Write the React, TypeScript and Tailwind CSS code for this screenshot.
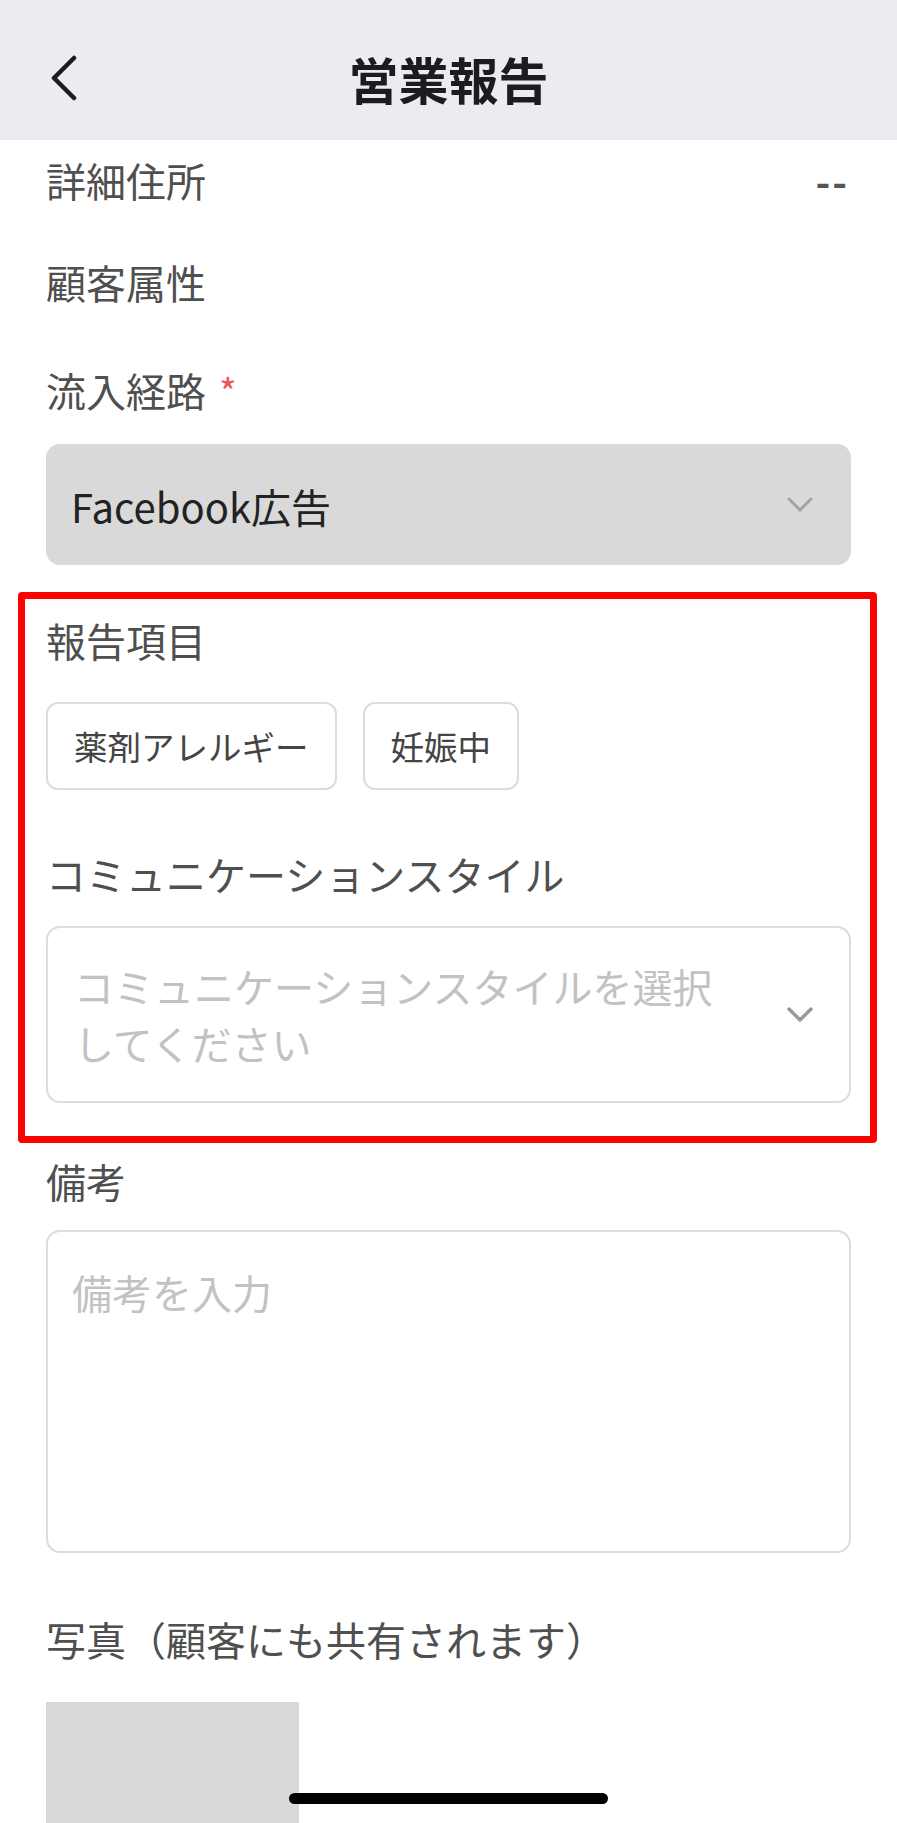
import React from 'react';

const Chevron: React.FC<{ className?: string; stroke?: number }> = ({ className, stroke = 3 }) => (
  <svg className={className} viewBox="0 0 26 16" fill="none">
    <polyline points="2,2 13,13 24,2" stroke="currentColor" strokeWidth={stroke} strokeLinecap="round" strokeLinejoin="round" />
  </svg>
);

const Label: React.FC<{ children: React.ReactNode; className?: string }> = ({ children, className = '' }) => (
  <div className={`text-[40px] leading-[56px] text-[#4f4f4f] ${className}`}>{children}</div>
);

const App: React.FC = () => {
  return (
    <div className="relative w-[897px] h-[1823px] overflow-hidden bg-white font-['Noto_Sans_CJK_JP',sans-serif]">
      {/* Header */}
      <header className="h-[140px] bg-[#ebebf0] flex items-center pt-[16px]">
        <div className="w-[130px] pl-[50px] flex items-center">
          <svg width="27" height="46" viewBox="0 0 27 46" fill="none">
            <polyline points="24,3 4,23 24,43" stroke="#1c1c1e" strokeWidth="4.5" strokeLinecap="round" strokeLinejoin="round" />
          </svg>
        </div>
        <h1 className="flex-1 text-center text-[50px] font-bold text-[#1c1c1e] leading-none">営業報告</h1>
        <div className="w-[130px]" />
      </header>

      {/* Form */}
      <main className="px-[46px] pt-[12px]">
        <div className="flex items-center justify-between">
          <Label>詳細住所</Label>
          <span className="text-[40px] leading-[56px] font-bold text-[#555] tracking-[2px] pr-[2px]">--</span>
        </div>

        <Label className="mt-[46px]">顧客属性</Label>

        <div className="mt-[52px] flex items-start">
          <Label>流入経路</Label>
          <span className="ml-[13px] mt-[5px] text-[38px] leading-[48px] text-[#e85a5a]">*</span>
        </div>

        <div className="mt-[26px] h-[121px] rounded-[14px] bg-[#d9d9d9] flex items-center justify-between pl-[25px] pr-[38px]">
          <span className="text-[40px] text-[#222] pt-[2px]">Facebook広告</span>
          <Chevron className="w-[26px] h-[16px] text-[#a3a3a3]" stroke={3} />
        </div>

        {/* Highlighted section */}
        <section className="mt-[27px] -ml-[28px] -mr-[26px] border-[7px] border-[#ff0000] rounded-[4px] pl-[21px] pr-[19px] pt-[13px] pb-[33px]">
          <Label>報告項目</Label>

          <div className="mt-[34px] flex gap-[26px]">
            <div className="h-[88px] px-[26px] flex items-center border-2 border-[#dcdcdc] rounded-[12px] text-[33.5px] text-[#444]">
              薬剤アレルギー
            </div>
            <div className="h-[88px] px-[26px] flex items-center border-2 border-[#dcdcdc] rounded-[12px] text-[33.5px] text-[#444]">
              妊娠中
            </div>
          </div>

          <Label className="mt-[56px]">コミュニケーションスタイル</Label>

          <div className="mt-[24px] h-[177px] border-2 border-[#dcdcdc] rounded-[14px] flex items-center justify-between pl-[26px] pr-[36px]">
            <span className="w-[650px] text-[40px] leading-[57px] text-[#c2c2c2]">
              コミュニケーションスタイルを選択してください
            </span>
            <Chevron className="w-[26px] h-[16px] text-[#9a9a9a]" stroke={3.5} />
          </div>
        </section>

        <Label className="mt-[10px]">備考</Label>

        <div className="mt-[21px] h-[323px] border-2 border-[#dcdcdc] rounded-[14px] pl-[24px] pt-[32px]">
          <div className="text-[40px] leading-[56px] text-[#c2c2c2]">備考を入力</div>
        </div>

        <Label className="mt-[58px]">写真（顧客にも共有されます）</Label>

        <div className="mt-[35px] w-[253px] h-[130px] bg-[#d9d9d9]" />
      </main>

      {/* Home indicator */}
      <div className="absolute left-[289px] top-[1793px] w-[319px] h-[11px] rounded-full bg-black" />
    </div>
  );
};

export default App;
